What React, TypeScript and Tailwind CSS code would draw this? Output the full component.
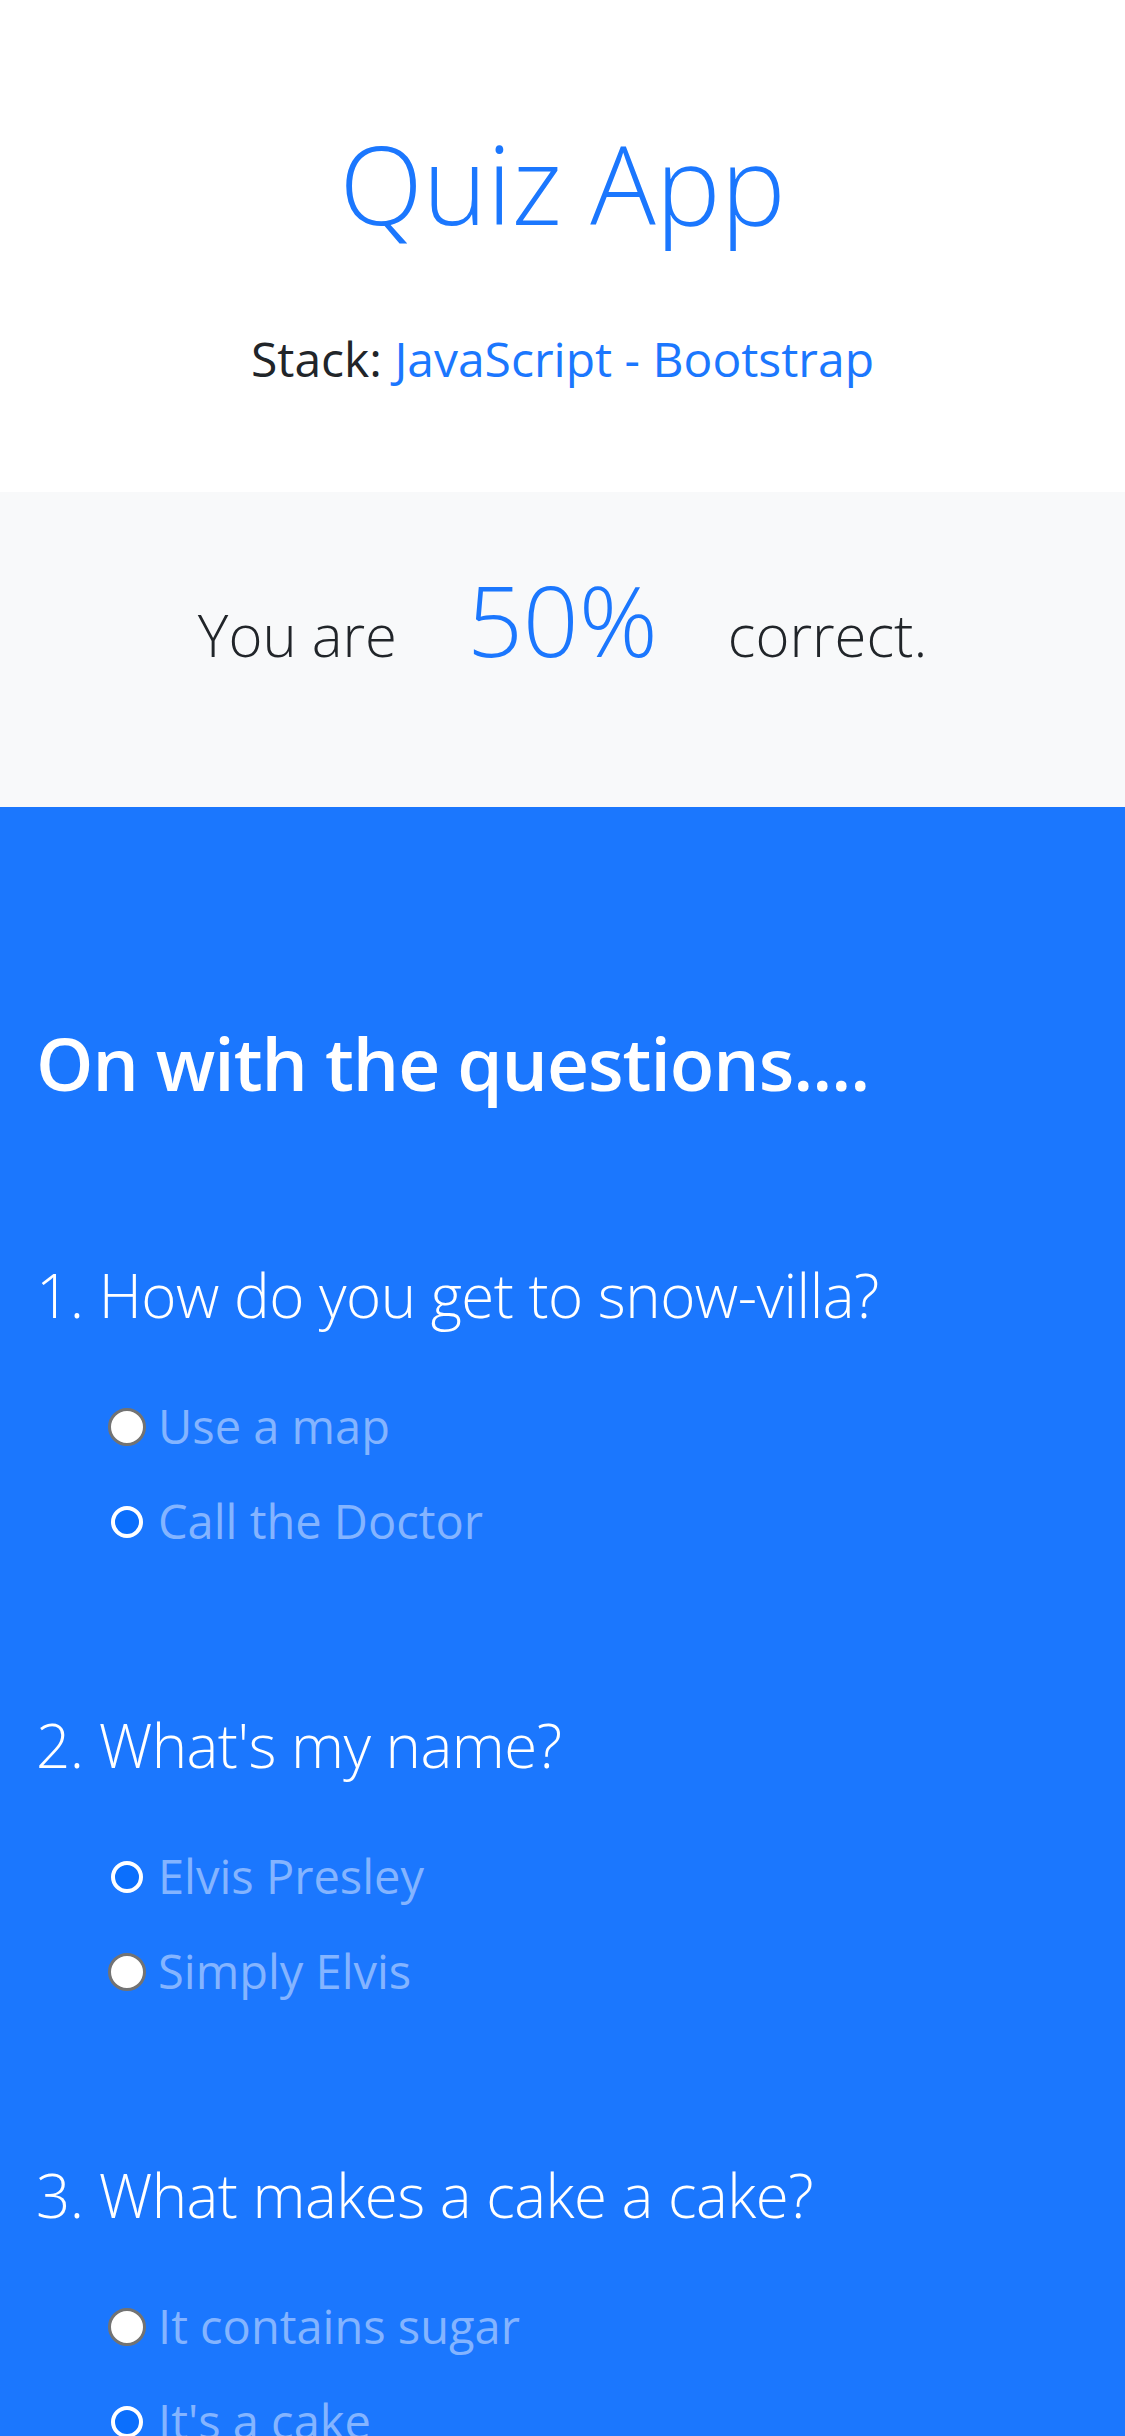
import React from 'react'

interface Question {
  id: number
  text: string
  options: { label: string; picked: boolean }[]
}

const questions: Question[] = [
  {
    id: 1,
    text: 'How do you get to snow-villa?',
    options: [
      { label: 'Use a map', picked: false },
      { label: 'Call the Doctor', picked: true },
    ],
  },
  {
    id: 2,
    text: "What's my name?",
    options: [
      { label: 'Elvis Presley', picked: true },
      { label: 'Simply Elvis', picked: false },
    ],
  },
  {
    id: 3,
    text: 'What makes a cake a cake?',
    options: [
      { label: 'It contains sugar', picked: false },
      { label: "It's a cake", picked: true },
    ],
  },
]

function Radio({ picked }: { picked: boolean }) {
  return (
    <span className="w-[38px] h-[38px] flex items-center justify-center shrink-0">
      {picked ? (
        <span className="w-[32px] h-[32px] rounded-full border-[4px] border-white bg-[#0b6ffd]" />
      ) : (
        <span className="w-[38px] h-[38px] rounded-full border-[3px] border-[#737373] bg-white" />
      )}
    </span>
  )
}

export default function App() {
  return (
    <div className="w-[1125px] min-h-[2436px] bg-[#1b77fe] font-['Open_Sans',sans-serif]">
      <header className="bg-white pt-[128px] pb-[109px] text-center">
        <h1 className="text-[109px] leading-none font-light text-[#1b77fe]">Quiz App</h1>
        <p className="mt-[98px] text-[48px] leading-none text-[#212529]">
          Stack: <span className="text-[#1b77fe]">JavaScript - Bootstrap</span>
        </p>
      </header>

      <section className="bg-[#f8f9fa] pt-[78px] pb-[139px] flex items-baseline justify-center gap-[70px] text-[#212529] font-light">
        <span className="text-[58px] leading-none">You are</span>
        <span className="text-[98px] leading-none text-[#1b77fe]">50%</span>
        <span className="text-[58px] leading-none">correct.</span>
      </section>

      <main className="pt-[219px] pb-[120px] pl-[36px] text-white">
        <h2 className="text-[73px] leading-none font-semibold tracking-[-1px]">On with the questions....</h2>
        <div className="mt-[166px] flex flex-col gap-[170px]">
          {questions.map((q) => (
            <div key={q.id}>
              <h3 className="text-[60px] leading-none font-light tracking-[-0.5px]">
                {q.id}. {q.text}
              </h3>
              <ul className="mt-[78px] ml-[72px] flex flex-col gap-[48px]">
                {q.options.map((o) => (
                  <li key={o.label} className="flex items-center gap-[12px] text-[47px] leading-none text-[#84b4ff]">
                    <Radio picked={o.picked} />
                    <span>{o.label}</span>
                  </li>
                ))}
              </ul>
            </div>
          ))}
        </div>
      </main>
    </div>
  )
}
